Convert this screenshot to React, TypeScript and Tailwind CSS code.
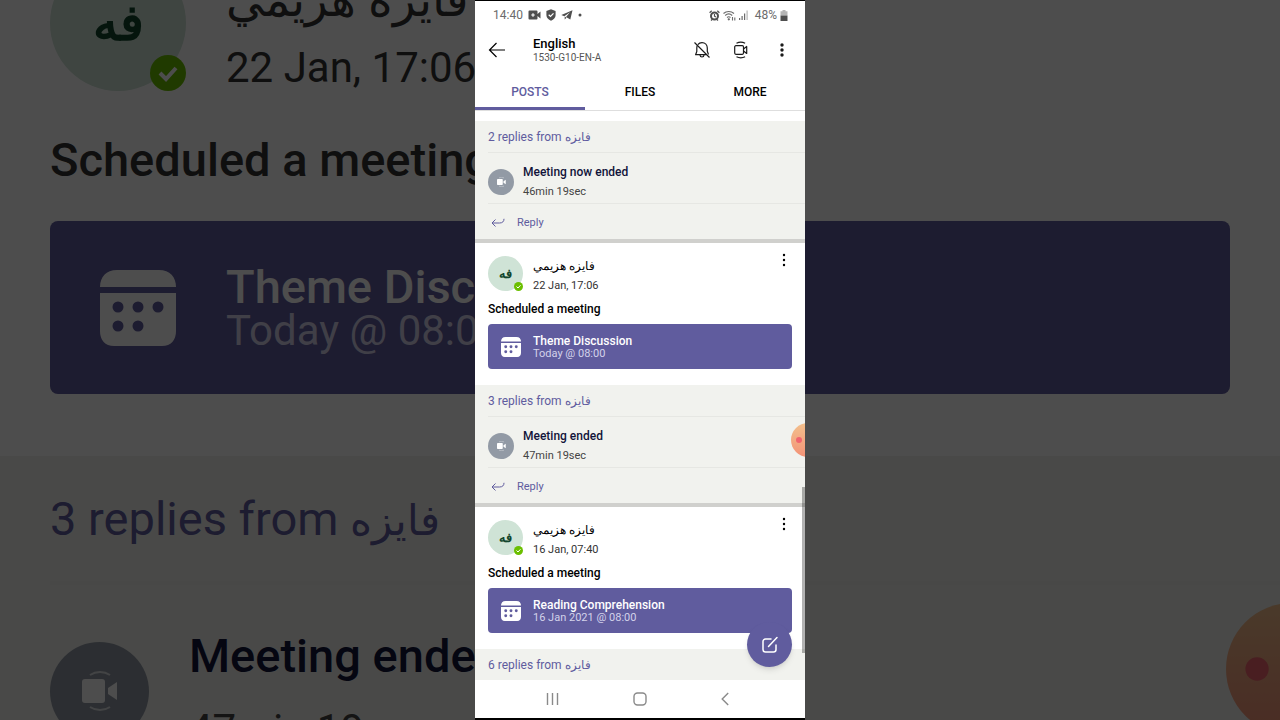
import { useState } from "react";
import clsx from "clsx";

interface Post {
  date: string;
  meeting: string;
  when: string;
}

interface Thread {
  replies: number;
  title?: string;
  duration?: string;
}

const AUTHOR = "فايزه هزيمي";
const AUTHOR_SHORT = "فايزه";
const INITIALS = "فه";

const TABS = ["POSTS", "FILES", "MORE"];

function BackIcon() {
  return (
    <svg viewBox="0 0 18 16" className="h-4 w-[18px]" fill="none" stroke="currentColor" strokeWidth="1.2">
      <path d="M8.5 1 1.5 8l7 7M1.5 8H17" />
    </svg>
  );
}

function BellOffIcon() {
  return (
    <svg viewBox="0 0 18 18" className="size-[18px]" fill="none" stroke="currentColor" strokeWidth="1.2" strokeLinejoin="round">
      <path d="M4.8 3.6C5.8 2.4 7.2 1.7 9 1.7c3.1 0 5.3 2.3 5.3 5.3v3.3l1.2 3.2M13.5 13.7H2.6l1.2-3.2V7c0-.9.2-1.7.5-2.4" />
      <path d="M7 14c.1 1.3.9 2 2 2s1.9-.7 2-2M1.5 1.5l15 15" />
    </svg>
  );
}

function MeetIcon() {
  return (
    <svg viewBox="0 0 16 18" className="h-[18px] w-4" fill="none" stroke="currentColor" strokeWidth="1.2" strokeLinejoin="round">
      <rect x="1.7" y="4.7" width="8.8" height="8.6" rx="1.2" />
      <path d="M10.5 8 13.7 5.500v7L10.5 10" />
      <path d="M3.5 2.2c2.6-1.3 6-1.3 8.6 0M3.5 15.8c2.6 1.3 6 1.3 8.6 0" />
    </svg>
  );
}

function MeetFilledIcon({ className }: { className: string }) {
  return (
    <svg viewBox="0 0 36 40" className={className} fill="#fff">
      <rect x="0" y="8" width="23" height="24" rx="3" />
      <path d="M26 17 35 11v18l-9-6z" />
      <path d="M8 4c6-4 14-4 20 0M8 36c6 4 14 4 20 0" fill="none" stroke="#fff" strokeWidth="2" opacity=".7" />
    </svg>
  );
}

function MoreIcon({ bold = false }: { bold?: boolean }) {
  return (
    <svg viewBox="0 0 4 14" className="h-3.5 w-1" fill="currentColor">
      <circle cx="2" cy="2" r={bold ? 1.7 : 1.2} />
      <circle cx="2" cy="7" r={bold ? 1.7 : 1.2} />
      <circle cx="2" cy="12" r={bold ? 1.7 : 1.2} />
    </svg>
  );
}

function ReplyIcon() {
  return (
    <svg viewBox="0 0 14 10" className="h-2.5 w-3.5" fill="none" stroke="currentColor" strokeWidth="1">
      <path d="M4.5 1.5 1 5l3.5 3.5M1 5h7.5C11.5 5 13 3.5 13 .8" />
    </svg>
  );
}

function CalendarIcon({ className }: { className: string }) {
  return (
    <svg viewBox="0 0 76 76" className={className}>
      <path d="M0 17C0 7 6 0 17 0h42c11 0 17 7 17 17z" fill="#fff" />
      <path d="M0 23h76v38c0 9-5 15-14 15H14C5 76 0 70 0 61z" fill="#fff" />
      <g fill="#605c9e">
        <circle cx="18" cy="37" r="5.5" />
        <circle cx="38" cy="37" r="5.5" />
        <circle cx="58" cy="37" r="5.5" />
        <circle cx="18" cy="56" r="5.5" />
        <circle cx="38" cy="56" r="5.5" />
      </g>
    </svg>
  );
}

function PresenceIcon({ className }: { className: string }) {
  return (
    <svg viewBox="0 0 36 36" className={className}>
      <circle cx="18" cy="18" r="18" fill="#6bbf00" />
      <path d="m10 18 6 6 10-11" fill="none" stroke="#fff" strokeWidth="4" />
    </svg>
  );
}

function ComposeIcon() {
  return (
    <svg viewBox="0 0 18 18" className="size-[18px]" fill="none" stroke="#fff" strokeWidth="1.5" strokeLinecap="round">
      <path d="M10 3H4.5A2.5 2.5 0 0 0 2 5.500v8A2.5 2.5 0 0 0 4.500 16h8a2.5 2.5 0 0 0 2.5-2.5V9" />
      <path d="m7.5 10.5 8.5-9" />
    </svg>
  );
}

function BubbleIcon({ className }: { className: string }) {
  return (
    <svg viewBox="0 0 34 34" className={className}>
      <defs>
        <linearGradient id="bubble" x1="0" y1="0" x2="0" y2="1">
          <stop offset="0" stopColor="#f3c08c" />
          <stop offset="1" stopColor="#f39277" />
        </linearGradient>
      </defs>
      <circle cx="17" cy="17" r="17" fill="url(#bubble)" />
      <circle cx="8" cy="17" r="3" fill="#f0646e" />
    </svg>
  );
}

function StatusBar() {
  return (
    <div className="flex items-center justify-between pt-[5px] pr-[17px] pl-[18px] text-[12px] leading-[18px] text-[#6b6b6b]">
      <div className="flex items-center gap-[5px]">
        <span>14:40</span>
        <svg viewBox="0 0 13 10" className="h-2.5 w-[13px]" fill="#4f4f4f">
          <path d="M1.500.5h7a1 1 0 0 1 1 1V4L12.500 1.500v7L9.500 6v2.500a1 1 0 0 1-1 1h-7a1 1 0 0 1-1-1v-7a1 1 0 0 1 1-1z" />
          <path d="M5 3.200v3.600M3.200 5h3.600" stroke="#fff" strokeWidth="1.2" />
        </svg>
        <svg viewBox="0 0 10 12" className="h-3 w-2.5" fill="#4f4f4f">
          <path d="M5 .3 9.600 2v4c0 2.700-2 4.800-4.600 5.700C2.400 10.800.4 8.700.4 6V2z" />
          <path d="m2.700 5.800 1.800 1.700 3-3.200" fill="none" stroke="#fff" strokeWidth="1.2" />
        </svg>
        <svg viewBox="0 0 12 10" className="h-2.5 w-3" fill="#4f4f4f">
          <path d="M11.500.3.3 5l3 1.200L9 2.200 5 6.900l4.300 2.700z" />
          <path d="M3.700 6.500v3l1.800-1.700z" />
        </svg>
        <svg viewBox="0 0 6 4" className="h-1 w-1.5" fill="#4f4f4f">
          <circle cx="2" cy="2" r="1.5" />
        </svg>
      </div>
      <div className="flex items-center gap-[3px]">
        <svg viewBox="0 0 11 11" className="size-[11px]" fill="none" stroke="#4f4f4f" strokeWidth="2">
          <circle cx="5.5" cy="6" r="3.5" />
          <path d="M.6 2.700 2.700.8M10.400 2.700 8.300.8M5.500 4v2.200l1.500.8M2 10.500l1-1M9 10.500l-1-1" strokeWidth="1.2" />
        </svg>
        <svg viewBox="0 0 13 11" className="h-[11px] w-[13px]" fill="none" stroke="#6b6b6b" strokeWidth="1.1">
          <path d="M.5 3.500c3-2.700 7.500-2.700 10.500 0M2.200 5.500c2-1.800 5-1.800 7 0M4 7.500c1-.9 2.500-.9 3.500 0" />
          <circle cx="5.8" cy="9.3" r=".6" fill="#6b6b6b" />
          <path d="M9.500 7v3.500M11.800 10.500V7.500" />
        </svg>
        <svg viewBox="0 0 9 10" className="h-2.5 w-[9px]" fill="#6b6b6b">
          <path d="M0 8h1.200v2H0zM2.500 6h1.200v4H2.500zM5 3.500h1.200V10H5z" />
          <path d="M7.500.5h1.200V10H7.500z" fill="#b5b5b5" />
        </svg>
        <span className="pl-1">48%</span>
        <svg viewBox="0 0 8 11" className="h-[11px] w-2">
          <path d="M2.500 0h3v1.200H7.500V5.500H.5V1.200h2z" fill="#b5b5b5" />
          <path d="M.5 5.500h7V11h-7z" fill="#4f4f4f" />
        </svg>
      </div>
    </div>
  );
}

function ChannelHeader() {
  return (
    <header className="flex items-center pt-2.5 pr-[21px] pl-[13px]">
      <button type="button" aria-label="Back">
        <BackIcon />
      </button>
      <div className="flex-1 pt-0.5 pl-[27px]">
        <h1 className="text-[13px] leading-[15px] font-medium text-black">English</h1>
        <p className="text-[10px] leading-[14px] text-[#555]">1530-G10-EN-A</p>
      </div>
      <div className="flex items-center text-[#1b1b1b]">
        <button type="button" aria-label="Mute channel">
          <BellOffIcon />
        </button>
        <button type="button" aria-label="Meet now" className="pr-[31px] pl-[22px]">
          <MeetIcon />
        </button>
        <button type="button" aria-label="More options">
          <MoreIcon bold />
        </button>
      </div>
    </header>
  );
}

function ReplySection({ thread }: { thread: Thread }) {
  return (
    <section className="bg-[#f1f2ee] pl-[13px]">
      <a href="#replies" className="block pt-[7px] pb-1.5 text-[12px] leading-[18px] text-[#605c9e]">
        {thread.replies} replies from <bdi>{AUTHOR_SHORT}</bdi>
      </a>
      {thread.title && (
        <>
          <div className="flex items-center gap-[9px] border-y border-[#e6e7e3] pt-[9px] pb-px">
            <span className="flex size-[26px] items-center justify-center rounded-full bg-[#929aa5]">
              <MeetFilledIcon className="h-2.5 w-[9px]" />
            </span>
            <div>
              <p className="text-[12px] leading-[20px] font-medium text-[#11143a]">{thread.title}</p>
              <p className="text-[11px] leading-[20px] text-[#444]">{thread.duration}</p>
            </div>
          </div>
          <button type="button" className="flex items-center gap-3 pt-2.5 pb-2 pl-[3px] text-[11px] leading-[17px] text-[#605c9e]">
            <ReplyIcon />
            Reply
          </button>
        </>
      )}
    </section>
  );
}

function PostCard({ post }: { post: Post }) {
  return (
    <article className="border-t-4 border-[#d0d0cd] bg-white px-[13px] pt-2.5 pb-4 text-black">
      <div className="flex">
        <div className="flex flex-1 gap-2.5 pt-[3px]">
          <div className="relative flex size-[35px] items-center justify-center rounded-full bg-[#cfe3d6] text-[13px] leading-[18px] font-bold text-[#13472d]">
            {INITIALS}
            <PresenceIcon className="absolute right-0 bottom-0 size-[9px]" />
          </div>
          <div>
            <p className="text-[12px] leading-[20px]">
              <bdi>{AUTHOR}</bdi>
            </p>
            <p className="text-[11px] leading-[19px] text-[#333]">{post.date}</p>
          </div>
        </div>
        <button type="button" aria-label="Post options" className="self-start px-1.5">
          <MoreIcon />
        </button>
      </div>
      <p className="pt-[5px] pb-1.5 text-[12px] leading-[18px] font-medium">Scheduled a meeting</p>
      <a href="#meeting" className="flex items-center gap-3 rounded-sm bg-[#605c9e] px-[13px] py-2.5">
        <CalendarIcon className="size-5" />
        <span className="text-[#d3d2ea]">
          <span className="block text-[12px] leading-[14px] font-medium text-white">{post.meeting}</span>
          <span className="block text-[11px] leading-[11px]">{post.when}</span>
        </span>
      </a>
    </article>
  );
}

function NavBar() {
  return (
    <nav className="flex items-center bg-white py-2.5 pr-[76px] pl-[71px] text-[#8a8a8a]">
      <button type="button" aria-label="Recent apps">
        <svg viewBox="0 0 13 18" className="h-[18px] w-[13px]" fill="none" stroke="currentColor" strokeWidth="1.4">
          <path d="M1.5 3v12M6.5 3v12M11.5 3v12" />
        </svg>
      </button>
      <button type="button" aria-label="Home" className="mx-auto">
        <svg viewBox="0 0 14 18" className="h-[18px] w-3.5" fill="none" stroke="currentColor" strokeWidth="1.4">
          <rect x="1" y="3" width="12" height="12" rx="3.5" />
        </svg>
      </button>
      <button type="button" aria-label="Back">
        <svg viewBox="0 0 8 18" className="h-[18px] w-2" fill="none" stroke="currentColor" strokeWidth="1.4">
          <path d="M7.2 3 1.2 9l6 6" />
        </svg>
      </button>
    </nav>
  );
}

function Phone() {
  const [tab, setTab] = useState("POSTS");

  return (
    <main className="flex h-full w-full max-w-[330px] flex-col border-t border-b-2 border-black bg-white">
      <StatusBar />
      <ChannelHeader />
      <div role="tablist" className="grid grid-cols-3 border-b border-[#dedede] pt-3">
        {TABS.map((name) => (
          <button
            key={name}
            type="button"
            role="tab"
            aria-selected={tab === name}
            onClick={() => setTab(name)}
            className={clsx(
              "border-b-[3px] pt-1.5 pb-1.5 text-[12px] leading-[18px] font-medium",
              tab === name ? "border-[#605c9e] text-[#605c9e]" : "border-transparent text-black"
            )}
          >
            {name}
          </button>
        ))}
      </div>
      <div className="relative min-h-0 flex-1">
        <div className="h-full overflow-hidden pt-2.5">
          <ReplySection thread={{ replies: 2, title: "Meeting now ended", duration: "46min 19sec" }} />
          <PostCard post={{ date: "22 Jan, 17:06", meeting: "Theme Discussion", when: "Today @ 08:00" }} />
          <ReplySection thread={{ replies: 3, title: "Meeting ended", duration: "47min 19sec" }} />
          <PostCard post={{ date: "16 Jan, 07:40", meeting: "Reading Comprehension", when: "16 Jan 2021 @ 08:00" }} />
          <ReplySection thread={{ replies: 6 }} />
        </div>
        <div className="absolute right-0 bottom-[27px] h-[166px] w-[3px] bg-black/30" />
        <div className="absolute right-0 bottom-[223px] w-3.5 overflow-hidden">
          <BubbleIcon className="size-[34px]" />
        </div>
        <button
          type="button"
          aria-label="New post"
          className="absolute right-[13px] bottom-[13px] flex size-[45px] items-center justify-center rounded-full bg-[#605c9e] shadow-md"
        >
          <ComposeIcon />
        </button>
      </div>
      <NavBar />
    </main>
  );
}

// Enlarged, dimmed copy of the feed that fills the space beside the phone
function Backdrop() {
  return (
    <div aria-hidden="true" className="relative flex h-full flex-col justify-center overflow-hidden bg-white opacity-30">
      <div className="px-[50px] pb-[62px]">
        <div className="flex gap-10">
          <div className="relative flex size-[136px] shrink-0 items-center justify-center rounded-full bg-[#cfe3d6] text-[50px] leading-[70px] font-bold text-[#13472d]">
            {INITIALS}
            <PresenceIcon className="absolute right-0 bottom-0 size-9" />
          </div>
          <div className="whitespace-nowrap text-[#333]">
            <p className="text-[47px] leading-[90px]">
              <bdi>{AUTHOR}</bdi>
            </p>
            <p className="text-[42px] leading-[46px]">22 Jan, 17:06</p>
          </div>
        </div>
        <p className="pt-[34px] pb-[26px] text-[47px] leading-[70px] font-medium text-[#333]">Scheduled a meeting</p>
        <div className="flex items-center gap-[50px] rounded-lg bg-[#605c9e] px-[50px] py-[42px]">
          <CalendarIcon className="size-[76px]" />
          <div>
            <p className="text-[47px] leading-[47px] font-medium text-white">Theme Discussion</p>
            <p className="text-[42px] leading-[42px] text-[#d3d2ea]">Today @ 08:00</p>
          </div>
        </div>
      </div>
      <div className="bg-[#f1f1ef] pt-7 pl-[50px]">
        <p className="pb-[25px] text-[47px] leading-[70px] text-[#605c9e]">
          3 replies from <bdi className="text-[42px]">{AUTHOR_SHORT}</bdi>
        </p>
        <div className="flex items-center gap-10 border-t-4 border-[#eeeeec] pt-8">
          <span className="flex size-[99px] items-center justify-center rounded-full bg-[#929aa5]">
            <MeetFilledIcon className="h-10 w-9" />
          </span>
          <div>
            <p className="text-[47px] leading-[78px] font-medium text-[#11143a]">Meeting ended</p>
            <p className="text-[42px] leading-[70px] text-[#444]">47min 19sec</p>
          </div>
        </div>
      </div>
      <div className="absolute right-0 bottom-[-15px] w-[54px] overflow-hidden">
        <BubbleIcon className="size-[132px]" />
      </div>
    </div>
  );
}

export default function App() {
  return (
    <div className="grid h-screen grid-cols-1 grid-rows-1 overflow-hidden bg-black font-['Roboto','Noto_Sans',sans-serif]">
      <div className="col-start-1 row-start-1 min-h-0">
        <Backdrop />
      </div>
      <div className="z-10 col-start-1 row-start-1 flex min-h-0 justify-center">
        <Phone />
      </div>
    </div>
  );
}
